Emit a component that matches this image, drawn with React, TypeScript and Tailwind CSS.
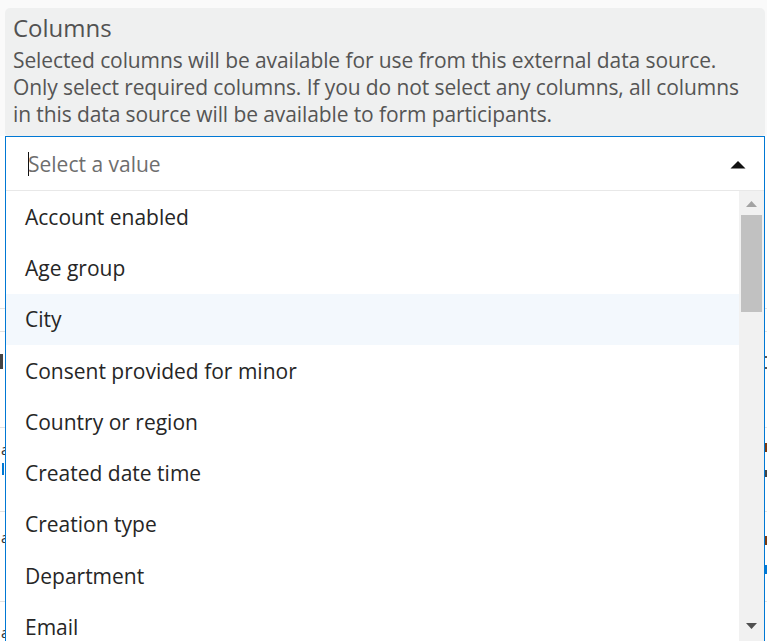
import React from "react";

const options = [
  "Account enabled",
  "Age group",
  "City",
  "Consent provided for minor",
  "Country or region",
  "Created date time",
  "Creation type",
  "Department",
  "Email",
];

// rows of the page that lie under the open list; only their edges show
function BehindRow({ h, children }: { h: string; children?: React.ReactNode }) {
  return <div className={`${h} border-b border-[#e3e3e3] flex justify-between`}>{children}</div>;
}

export default function App() {
  return (
    <div
      className="relative w-[767px] h-[641px] overflow-hidden bg-[#fafafa]"
      style={{ fontFamily: '"Open Sans", "Noto Sans", sans-serif' }}
    >
      <div className="pt-[8px] pl-[5px] pr-[2px]">
        <div className="rounded-t-[5px] rounded-b-[4px] bg-[#eff0f0] pl-[8px] pr-[6px] pt-[6px] h-[128px]">
          <h2 className="text-[24px] leading-[28px] text-[#525252]">Columns</h2>
          <p className="mt-[5px] text-[21px] leading-[27px] text-[#555] tracking-[-0.1px]">
            Selected columns will be available for use from this external data source. Only select required columns.
            If you do not select any columns, all columns in this data source will be available to form participants.
          </p>
        </div>
      </div>

      {/* page content under the dropdown */}
      <div className="bg-white h-[505px] pt-[54px] flex flex-col">
        <div className="h-[119px] border-b border-[#e3e3e3]" />
        <BehindRow h="h-[23px]" />
        <BehindRow h="h-[96px]">
          <div className="mt-[22px] w-[3px] h-[15px] bg-[#444]" />
          <div className="mt-[24px] flex flex-col gap-[9px]">
            <div className="w-[2px] h-[2px] bg-[#555]" />
            <div className="w-[2px] h-[2px] bg-[#555]" />
          </div>
        </BehindRow>
        <BehindRow h="h-[84px]">
          <div className="mt-[14px] flex flex-col items-start gap-[6px]">
            <span className="text-[15px] leading-[15px] text-[#333] pl-[1px]">a</span>
            <div className="ml-[2px] w-[2px] h-[12px] bg-[#0078d4]" />
          </div>
          <div className="mt-[15px] flex flex-col gap-[18px]">
            <div className="w-[2px] h-[9px] bg-[#7a3a10]" />
            <div className="w-[2px] h-[7px] bg-[#444]" />
          </div>
        </BehindRow>
        <BehindRow h="h-[90px]">
          <span className="mt-[18px] text-[15px] leading-[15px] text-[#333] pl-[1px]">a</span>
          <div className="mt-[24px] flex flex-col gap-[20px]">
            <div className="w-[2px] h-[9px] bg-[#7a3a10]" />
            <div className="w-[2px] h-[9px] bg-[#0078d4]" />
          </div>
        </BehindRow>
        <div className="flex">
          <span className="mt-[23px] text-[15px] leading-[15px] text-[#333] pl-[1px]">a</span>
        </div>
      </div>

      {/* open combobox */}
      <div className="absolute left-[5px] top-[136px] bottom-0 w-[760px] border border-b-0 border-[#0078d4] bg-white flex flex-col">
        <div className="h-[53px] flex items-center pl-[22px] pr-[18px] pt-[1px] shrink-0">
          <span className="w-px h-[24px] bg-[#111]" />
          <span className="text-[21px] text-[#6e6e6e] leading-none -ml-px pt-[1px]">Select a value</span>
          <span className="ml-auto">
            <svg width="16" height="9" viewBox="0 0 16 9">
              <path d="M0.5 8.5 L8 1 L15.5 8.5 Z" fill="#111" />
            </svg>
          </span>
        </div>
        <div className="flex flex-1 border-t border-[#e8e8e8] min-h-0">
          <ul className="flex-1">
            {options.map((o) => (
              <li
                key={o}
                className={`h-[51.25px] flex items-center pl-[19px] pt-[2px] text-[21px] text-[#262626] ${
                  o === "City" ? "bg-[#f3f8fd]" : ""
                }`}
              >
                {o}
              </li>
            ))}
          </ul>
          <div className="w-[25px] bg-[#f1f1f1] flex flex-col items-center pb-[3px]">
            <svg className="mt-[10px]" width="11" height="6" viewBox="0 0 11 6">
              <path d="M0 6 L5.5 0 L11 6 Z" fill="#a3a3a3" />
            </svg>
            <div className="mt-[8px] w-[21px] h-[97px] bg-[#c1c1c1]" />
            <svg className="mt-auto mb-[9px]" width="11" height="6" viewBox="0 0 11 6">
              <path d="M0 0 L11 0 L5.5 6 Z" fill="#505050" />
            </svg>
          </div>
        </div>
      </div>
    </div>
  );
}
